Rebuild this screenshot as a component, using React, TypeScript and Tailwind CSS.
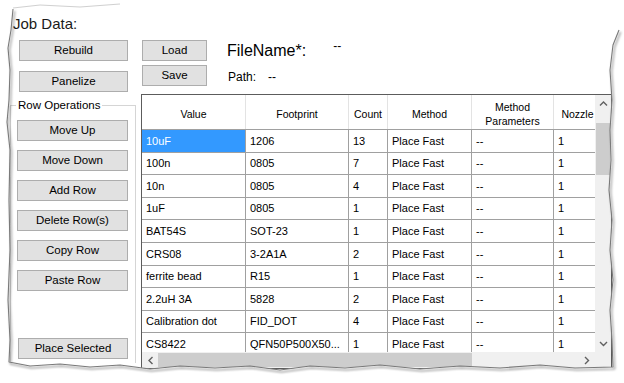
import React from 'react';

const rows = [
  ['10uF', '1206', '13'],
  ['100n', '0805', '7'],
  ['10n', '0805', '4'],
  ['1uF', '0805', '1'],
  ['BAT54S', 'SOT-23', '1'],
  ['CRS08', '3-2A1A', '2'],
  ['ferrite bead', 'R15', '1'],
  ['2.2uH 3A', '5828', '2'],
  ['Calibration dot', 'FID_DOT', '4'],
  ['CS8422', 'QFN50P500X50...', '1'],
];

const colW = ['w-[104px]', 'w-[103px]', 'w-[39px]', 'w-[84px]', 'w-[82px]', 'w-[48px]'];

function Btn({ label, className }: { label: string; className: string }) {
  return (
    <div
      className={
        'flex items-center justify-center border border-[#adadad] bg-[#e1e1e1] text-[11.5px] leading-none h-[21px] ' +
        className
      }
    >
      {label}
    </div>
  );
}

function Chevron({ dir }: { dir: 'up' | 'down' | 'left' | 'right' }) {
  const d = {
    up: 'M1 5.5 L4.5 2 L8 5.5',
    down: 'M1 2 L4.5 5.5 L8 2',
    left: 'M5.5 1 L2 4.5 L5.5 8',
    right: 'M2 1 L5.5 4.5 L2 8',
  }[dir];
  const vert = dir === 'up' || dir === 'down';
  return (
    <svg width={vert ? 9 : 7} height={vert ? 7 : 9} viewBox={vert ? '0 0 9 7' : '0 0 7 9'}>
      <path d={d} stroke="#606060" strokeWidth="1.4" fill="none" />
    </svg>
  );
}

function Grid() {
  const headers = ['Value', 'Footprint', 'Count', 'Method', 'Method\nParameters', 'Nozzle'];
  return (
    <div className="ml-[1px] w-[471px] h-[275px] border border-[#5c5c5c] bg-white flex flex-col">
      <div className="flex h-[257px]">
        <div className="w-[453px] overflow-hidden">
          <div className="flex h-[35px] border-b border-[#a0a0a0] text-[10.5px] leading-[14px]">
            {headers.map((h, i) => (
              <div
                key={i}
                className={colW[i] + ' shrink-0 flex items-center justify-center text-center whitespace-pre pt-[3px] border-r border-[#e3e3e3]'}
              >
                {h}
              </div>
            ))}
          </div>
          {rows.map((r, ri) => {
            const cells = [r[0], r[1], r[2], 'Place Fast', '--', '1'];
            return (
              <div key={ri} className="flex h-[22.6px] border-b border-[#a0a0a0] text-[11px]">
                {cells.map((c, ci) => (
                  <div
                    key={ci}
                    className={
                      colW[ci] +
                      ' shrink-0 flex items-center px-[4px] whitespace-nowrap overflow-hidden border-r border-[#a0a0a0] ' +
                      (ri === 0 && ci === 0 ? 'bg-[#3399ff] text-white' : '')
                    }
                  >
                    {c}
                  </div>
                ))}
              </div>
            );
          })}
        </div>
        <div className="w-[16px] bg-[#f0f0f0] flex flex-col items-center">
          <div className="h-[17px] flex items-center justify-center">
            <Chevron dir="up" />
          </div>
          <div className="flex-1 w-full px-[1px]">
            <div className="mt-[11px] h-[52px] w-full bg-[#cdcdcd]" />
          </div>
          <div className="h-[17px] flex items-center justify-center">
            <Chevron dir="down" />
          </div>
        </div>
      </div>
      <div className="flex h-[16px]">
        <div className="w-[453px] bg-[#f0f0f0] flex items-center">
          <div className="w-[16px] flex justify-center">
            <Chevron dir="left" />
          </div>
          <div className="h-[14px] w-[314px] bg-[#cdcdcd]" />
          <div className="flex-1" />
          <div className="w-[17px] flex justify-center">
            <Chevron dir="right" />
          </div>
        </div>
        <div className="w-[16px] bg-[#f0f0f0]" />
      </div>
    </div>
  );
}

export default function App() {
  const paper =
    'M13 9 L11 30 L8 48 L10 70 L9 100 L7 122 L10 150 L9 200 L10 250 L8 300 L10 340 L9 362 ' +
    'L30 366 L60 364 L90 367 L120 365 L150 369 L180 366 L215 368 L250 366 L280 370 L310 366 L345 368 L380 365 L420 369 L460 366 L500 368 L540 365 L575 368 L613 367 ' +
    'L612 340 L610 310 L613 280 L610 250 L612 220 L609 190 L611 160 L610 130 L612 100 L610 70 L613 45 L619 30';
  return (
    <div className="relative w-[624px] h-[383px] bg-white overflow-hidden text-black font-['Liberation_Sans',Arial,sans-serif]">
      <div className="flex flex-col pt-[15px] pl-[10px]">
        <div className="ml-[3px] text-[15px] leading-[18px] text-[#1a1a1a]">Job Data:</div>
        <div className="flex mt-[7px]">
          <div className="w-[126px] flex flex-col">
            <Btn label="Rebuild" className="ml-[9px] w-[109px]" />
            <Btn label="Panelize" className="ml-[9px] w-[109px] mt-[10px]" />
            <fieldset className="mt-[6px] border border-b-0 border-[#d5d5d5] pb-[4px] flex flex-col">
              <legend className="ml-[5px] px-[2px] text-[11.5px] leading-[14px]">Row Operations</legend>
              <Btn label="Move Up" className="ml-[6px] w-[111px] mt-[8px]" />
              <Btn label="Move Down" className="ml-[6px] w-[111px] mt-[9px]" />
              <Btn label="Add Row" className="ml-[6px] w-[111px] mt-[9px]" />
              <Btn label="Delete Row(s)" className="ml-[6px] w-[111px] mt-[9px]" />
              <Btn label="Copy Row" className="ml-[6px] w-[111px] mt-[9px]" />
              <Btn label="Paste Row" className="ml-[6px] w-[111px] mt-[9px]" />
              <Btn label="Place Selected" className="ml-[7px] w-[110px] mt-[47px]" />
            </fieldset>
          </div>
          <div className="ml-[4px] flex flex-col">
            <div className="flex items-start h-[21px]">
              <Btn label="Load" className="ml-[2px] w-[65px]" />
              <span className="ml-[20px] text-[16px] leading-[21px]">FileName*:</span>
              <span className="ml-[27px] -mt-[1px] text-[12px] leading-[14px]">--</span>
            </div>
            <div className="flex items-center mt-[4px]">
              <Btn label="Save" className="ml-[2px] w-[65px]" />
              <span className="ml-[21px] mt-[2px] text-[12px] leading-[14px]">Path:</span>
              <span className="ml-[12px] mt-[2px] text-[12px] leading-[14px]">--</span>
            </div>
            <div className="mt-[8px]">
              <Grid />
            </div>
          </div>
        </div>
      </div>
      <svg className="absolute inset-0 pointer-events-none" width="624" height="383" viewBox="0 0 624 383">
        <defs>
          <filter id="sh" x="-10%" y="-10%" width="120%" height="120%">
            <feDropShadow dx="1.5" dy="2" stdDeviation="1.3" floodColor="#000" floodOpacity="0.55" />
          </filter>
        </defs>
        <path d={'M0 0 H624 V383 H0 Z ' + paper + ' L624 30 L624 0 L13 0 Z'} fill="#fff" fillRule="evenodd" />
        <path d={paper} fill="none" stroke="#7a7a7a" strokeWidth="1.1" strokeLinejoin="round" filter="url(#sh)" />
        <path d="M13 8 L40 5 L80 7 L120 4" fill="none" stroke="#d0d0d0" strokeWidth="1" />
      </svg>
    </div>
  );
}
